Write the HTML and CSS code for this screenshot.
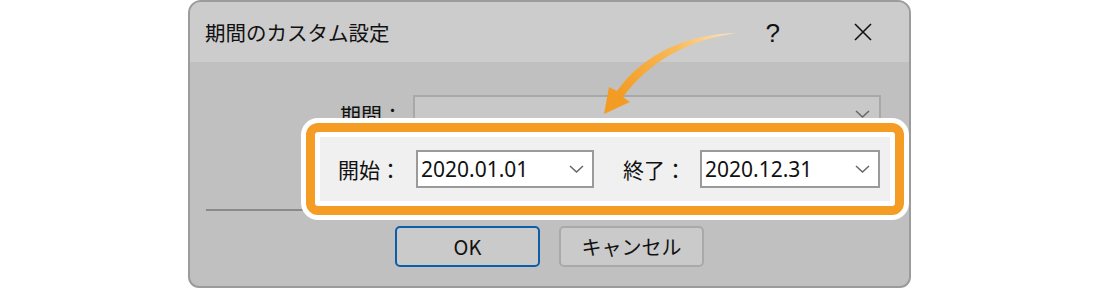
FILE: index.html
```html
<!DOCTYPE html>
<html lang="ja">
<head>
    <meta charset="UTF-8">
    <title>期間のカスタム設定</title>
    <link rel="stylesheet" href="styles.css">
</head>
<body>
    <div class="stage">
        <div class="dialog">
            <div class="titlebar">
                <span class="title">期間のカスタム設定</span>
                <span class="help">?</span>
                <svg class="close" width="20" height="20" viewBox="0 0 20 20">
                    <path d="M2 2 L18 18 M18 2 L2 18" stroke="#111" stroke-width="1.6" fill="none"/>
                </svg>
            </div>
            <div class="dialog-body">
                <div class="period-row">
                    <span class="label">期間：</span>
                    <div class="select dim">
                        <span class="value"></span>
                        <svg class="chevron" width="15" height="8" viewBox="0 0 15 8">
                            <path d="M1 1 L7.5 7 L14 1" stroke="#666" stroke-width="1.5" fill="none"/>
                        </svg>
                    </div>
                </div>
                <div class="separator"></div>
                <div class="buttons">
                    <button class="btn primary">OK</button>
                    <button class="btn">キャンセル</button>
                </div>
            </div>
        </div>

        <!-- annotation: highlighted date range -->
        <div class="highlight">
            <span class="label">開始：</span>
            <div class="select start">
                <span class="value">2020.01.01</span>
                <svg class="chevron" width="15" height="8" viewBox="0 0 15 8">
                    <path d="M1 1 L7.5 7 L14 1" stroke="#666" stroke-width="1.5" fill="none"/>
                </svg>
            </div>
            <span class="label end-label">終了：</span>
            <div class="select end">
                <span class="value">2020.12.31</span>
                <svg class="chevron" width="15" height="8" viewBox="0 0 15 8">
                    <path d="M1 1 L7.5 7 L14 1" stroke="#666" stroke-width="1.5" fill="none"/>
                </svg>
            </div>
        </div>

        <svg class="arrow" width="1100" height="288" viewBox="0 0 1100 288">
            <defs>
                <linearGradient id="arrowFill" gradientUnits="userSpaceOnUse" x1="736" y1="33" x2="622" y2="96">
                    <stop offset="0" stop-color="#fde8c8"/>
                    <stop offset="0.45" stop-color="#f8bb5a"/>
                    <stop offset="1" stop-color="#f39c24"/>
                </linearGradient>
            </defs>
            <path d="M736 33 C690 34 645 52 617 91 L609 87 L604 114 L630 102 L623 97 C650 60 690 40 736 33 Z" fill="url(#arrowFill)"/>
        </svg>
    </div>
</body>
</html>
```

FILE: styles.css
```css
body {
    margin: 0;
    background: #ffffff;
    font-family: "Noto Sans CJK JP", "Noto Sans", sans-serif;
    color: #111;
}
.stage {
    position: relative;
    width: 1100px;
    height: 288px;
    padding-left: 188px;
    box-sizing: border-box;
    overflow: hidden;
}
.dialog {
    width: 723px;
    height: 288px;
    box-sizing: border-box;
    border: 2px solid #9b9b9b;
    border-radius: 13px 13px 11px 11px;
    background: #c0c0c0;
    overflow: hidden;
    display: flex;
    flex-direction: column;
}
.titlebar {
    height: 60px;
    flex: none;
    background: #cccccc;
    display: flex;
    align-items: center;
    padding: 0 36px 0 15px;
}
.title {
    font-size: 20.5px;
    flex: 1;
    line-height: 1;
}
.help {
    font-family: "Liberation Sans", sans-serif;
    font-size: 26px;
    line-height: 1;
    margin-right: 73px;
    margin-top: 2px;
}
.dialog-body {
    flex: 1;
    display: flex;
    flex-direction: column;
}
.period-row {
    display: flex;
    align-items: center;
    margin: 33px 28px 0 150px;
    gap: 10px;
}
.label {
    font-size: 21px;
    line-height: 1;
    white-space: nowrap;
}
.select {
    height: 38px;
    box-sizing: border-box;
    border: 2px solid #9a9a9a;
    background: #ffffff;
    display: flex;
    align-items: center;
    padding: 0 8px 0 3px;
}
.select.dim {
    flex: 1;
    background: #c8c8c8;
    border-color: #a8a8a8;
    padding-right: 9px;
}
.select .value {
    flex: 1;
    font-family: "Noto Sans", sans-serif;
    font-size: 21px;
    line-height: 1;
    color: #111;
}
.chevron {
    flex: none;
}
.separator {
    height: 2px;
    background: #8a8a8a;
    margin: 76px 16px 0 16px;
}
.buttons {
    display: flex;
    justify-content: center;
    gap: 19px;
    margin-top: 15px;
}
.btn {
    width: 145px;
    height: 41px;
    box-sizing: border-box;
    border: 2px solid #a9a9a9;
    border-radius: 5px;
    background: #cacaca;
    font-family: "Noto Sans CJK JP", "Noto Sans", sans-serif;
    font-size: 20px;
    color: #111;
    padding: 0;
}
.btn.primary {
    border-color: #0b5ea8;
}
.highlight {
    position: absolute;
    left: 306px;
    top: 123px;
    width: 598px;
    height: 92px;
    box-sizing: border-box;
    border: 9px solid #f49c23;
    border-radius: 12px;
    background: #f0f0f0;
    box-shadow: 0 0 0 5px #ffffff, inset 0 0 0 5px #ffffff;
    display: flex;
    align-items: center;
    padding-left: 23px;
}
.highlight .label {
    width: 78px;
}
.highlight .end-label {
    width: 77px;
    margin-left: 29px;
}
.select.start {
    width: 178px;
}
.select.end {
    width: 180px;
}
.arrow {
    position: absolute;
    left: 0;
    top: 0;
    pointer-events: none;
}
```
